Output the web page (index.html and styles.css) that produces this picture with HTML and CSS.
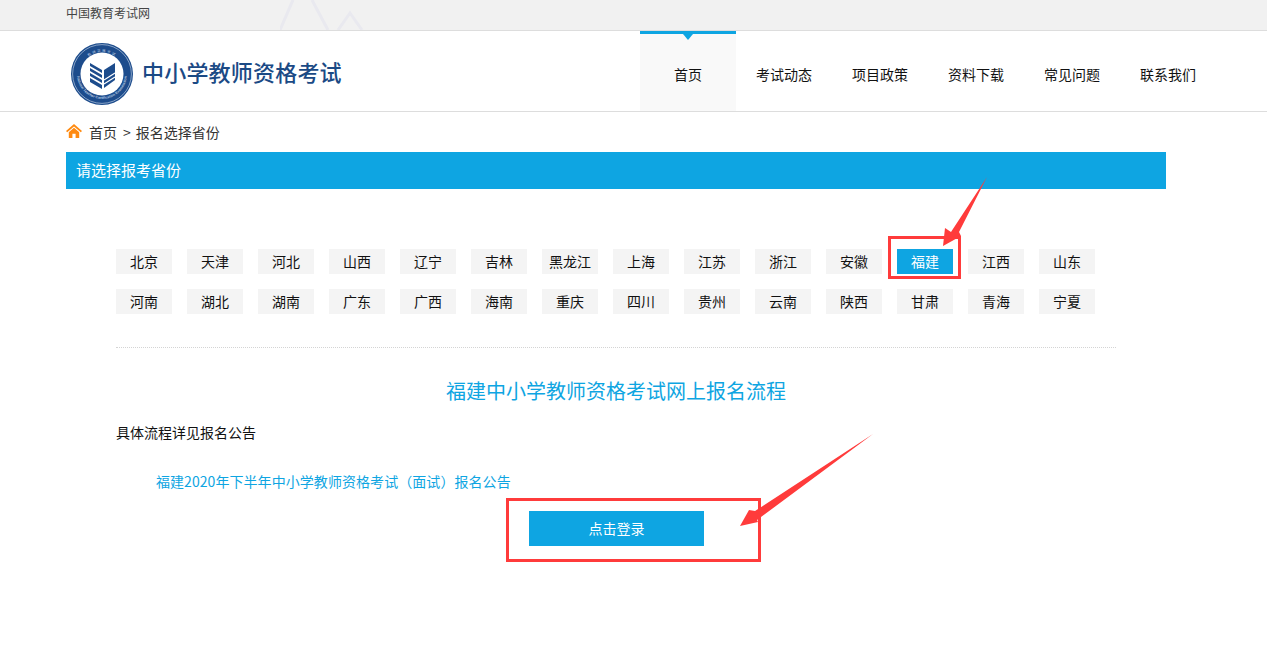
FILE: index.html
```html
<!DOCTYPE html>
<html lang="zh-CN">
<head>
<meta charset="utf-8">
<title>中小学教师资格考试</title>
<link rel="stylesheet" href="styles.css">
</head>
<body>
<div class="topbar">
  <span class="topbar-text">中国教育考试网</span>
  <svg class="peaks" width="90" height="30" viewBox="0 0 90 30"><path d="M0 30 L13 0 M32 0 L48 30 M58 30 L70 13 L82 30" fill="none" stroke="#e9e9ef" stroke-width="3"/></svg>
</div>
<header class="header">
  <div class="brand">
    <svg class="logo" width="64" height="64" viewBox="0 0 64 64">
      <defs>
        <path id="ring-low" d="M7 32 a25 25 0 0 0 50 0"/>
        <path id="ring-top" d="M10 32 a22 22 0 0 1 44 0"/>
      </defs>
      <circle cx="32" cy="32" r="31" fill="#1d4c8c"/>
      <circle cx="32" cy="32" r="29.4" fill="none" stroke="#cfdcec" stroke-width=".6"/>
      <circle cx="32" cy="32" r="21.5" fill="#fff"/>
      <text class="logo-low"><textPath href="#ring-low" startOffset="50%">National Teacher Certification Examination</textPath></text>
      <text class="logo-top"><textPath href="#ring-top" startOffset="50%">教师资格考试</textPath></text>
      <path d="M20 21 L32 28 V31 L20 24 Z M20 26 L32 33 V36 L20 29 Z M20 31 L32 38 V41 L20 34 Z M20 36 L32 43 V47 L20 40 Z" fill="#1d4c8c"/>
      <path d="M34 28 L45 21 V38 L34 46 Z" fill="#1d4c8c"/>
      <path d="M34 38 L45 31 M34 42 L45 35" stroke="#fff" stroke-width="1.2"/>
    </svg>
    <span class="brand-name">中小学教师资格考试</span>
  </div>
  <nav class="nav">
    <a class="nav-item nav-active">首页</a>
    <a class="nav-item">考试动态</a>
    <a class="nav-item">项目政策</a>
    <a class="nav-item">资料下载</a>
    <a class="nav-item">常见问题</a>
    <a class="nav-item">联系我们</a>
  </nav>
</header>
<main class="main">
  <div class="crumbs">
    <svg class="home" width="16" height="14" viewBox="0 0 16 14"><path d="M8 0 L16 7 L14.8 8.2 L8 2.4 L1.2 8.2 L0 7 Z M2.8 8.2 L8 3.8 L13.2 8.2 V14 H9.6 V9.8 H6.4 V14 H2.8 Z" fill="#ff8a10"/></svg>
    <span>首页</span><span class="crumb-sep">&gt;</span><span>报名选择省份</span>
  </div>
  <div class="section-bar">请选择报考省份</div>
  <div class="content">
    <div class="provinces">
      <a class="prov">北京</a><a class="prov">天津</a><a class="prov">河北</a><a class="prov">山西</a><a class="prov">辽宁</a><a class="prov">吉林</a><a class="prov">黑龙江</a><a class="prov">上海</a><a class="prov">江苏</a><a class="prov">浙江</a><a class="prov">安徽</a><a class="prov prov-active">福建</a><a class="prov">江西</a><a class="prov">山东</a>
      <a class="prov">河南</a><a class="prov">湖北</a><a class="prov">湖南</a><a class="prov">广东</a><a class="prov">广西</a><a class="prov">海南</a><a class="prov">重庆</a><a class="prov">四川</a><a class="prov">贵州</a><a class="prov">云南</a><a class="prov">陕西</a><a class="prov">甘肃</a><a class="prov">青海</a><a class="prov">宁夏</a>
    </div>
    <h2 class="flow-title">福建中小学教师资格考试网上报名流程</h2>
    <p class="flow-note">具体流程详见报名公告</p>
    <a class="flow-link">福建2020年下半年中小学教师资格考试（面试）报名公告</a>
    <div class="login-row"><a class="login">点击登录</a></div>
  </div>
</main>
<svg class="marks" width="1267" height="654" viewBox="0 0 1267 654">
  <rect x="889.5" y="237.5" width="70" height="40" fill="none" stroke="#ff3b3b" stroke-width="3"/>
  <rect x="507.5" y="499.5" width="252" height="61" fill="none" stroke="#ff3b3b" stroke-width="3"/>
  <path d="M987 177 L959 232 L961 236 L943 246 L945 228 L951 232 Z" fill="#ff3b3b"/>
  <path d="M873 434 L755 511 L749 510 L740 526 L758 522 L757 520 Z" fill="#ff3b3b"/>
</svg>
</body>
</html>
```
FILE: styles.css
```css
* { box-sizing: border-box; }
html, body { margin: 0; padding: 0; }
body {
  position: relative;
  height: 654px;
  overflow: hidden;
  background: #fff;
  color: #222;
  font-family: "Noto Sans CJK SC", "Liberation Sans", sans-serif;
  font-size: 14px;
  text-spacing-trim: space-all;
}
a { color: inherit; text-decoration: none; }

.topbar {
  position: relative;
  height: 31px;
  padding-left: 66px;
  background: #f1f1f1;
  border-bottom: 1px solid #ddd;
  font-size: 12px;
  line-height: 25px;
  color: #444;
}
.peaks { position: absolute; left: 280px; top: 0; }

.header {
  display: flex;
  justify-content: space-between;
  height: 81px;
  padding-left: 70px;
  padding-right: 51px;
  border-bottom: 1px solid #ddd;
}
.brand { display: flex; align-items: center; gap: 8px; height: 80px; }
.logo { display: block; margin-top: 5px; }
.logo-low { font-family: "Liberation Sans", sans-serif; font-size: 3.6px; font-weight: bold; fill: #b9cbe2; text-anchor: middle; }
.logo-top { font-size: 3.4px; fill: #b9cbe2; text-anchor: middle; letter-spacing: 1.4px; }
.brand-name {
  font-size: 22px;
  letter-spacing: .2px;
  font-weight: 500;
  color: #1b4a85;
}
.nav { display: flex; }
.nav-item {
  position: relative;
  width: 96px;
  height: 80px;
  padding-top: 33px;
  text-align: center;
  line-height: 20px;
  color: #111;
}
.nav-active { background: #f9f9f9; border-top: 3px solid #0ea5e2; padding-top: 30px; }
.nav-active::after {
  content: "";
  position: absolute;
  left: 43px;
  top: 0;
  border: 5px solid transparent;
  border-top: 6px solid #0ea5e2;
  border-bottom: 0;
}

.main { width: 1100px; margin-left: 66px; }
.crumbs {
  display: flex;
  align-items: center;
  height: 40px;
  padding-bottom: 1px;
  color: #333;
}
.home { margin-right: 7px; margin-top: -2px; }
.crumb-sep { margin: 0 5px 0 6px; }
.section-bar {
  height: 37px;
  padding-left: 10px;
  background: #0ea5e2;
  color: #fff;
  font-size: 15px;
  line-height: 36px;
}
.content { padding: 60px 50px 0; }
.provinces {
  display: flex;
  flex-wrap: wrap;
  gap: 15px;
  padding-bottom: 33px;
  border-bottom: 1px dotted #d4d4d4;
}
.prov {
  width: 56px;
  height: 25px;
  background: #f4f4f4;
  color: #111;
  text-align: center;
  line-height: 25px;
}
.prov-active { background: #0ea5e2; color: #fff; }
.flow-title {
  margin: 28px 0 0;
  text-align: center;
  font-size: 20px;
  font-weight: 400;
  line-height: 30px;
  color: #0ea5e2;
}
.flow-note { margin: 16px 0 0; line-height: 20px; color: #111; }
.flow-link {
  display: block;
  margin: 29px 0 0 40px;
  line-height: 20px;
  font-size: 14px;
  letter-spacing: .06px;
  color: #0ea5e2;
}
.login-row { padding: 20px 0 0 413px; }
.login {
  display: block;
  width: 175px;
  height: 35px;
  background: #0ea5e2;
  color: #fff;
  text-align: center;
  line-height: 35px;
}
.marks { position: absolute; left: 0; top: 0; pointer-events: none; }
```
